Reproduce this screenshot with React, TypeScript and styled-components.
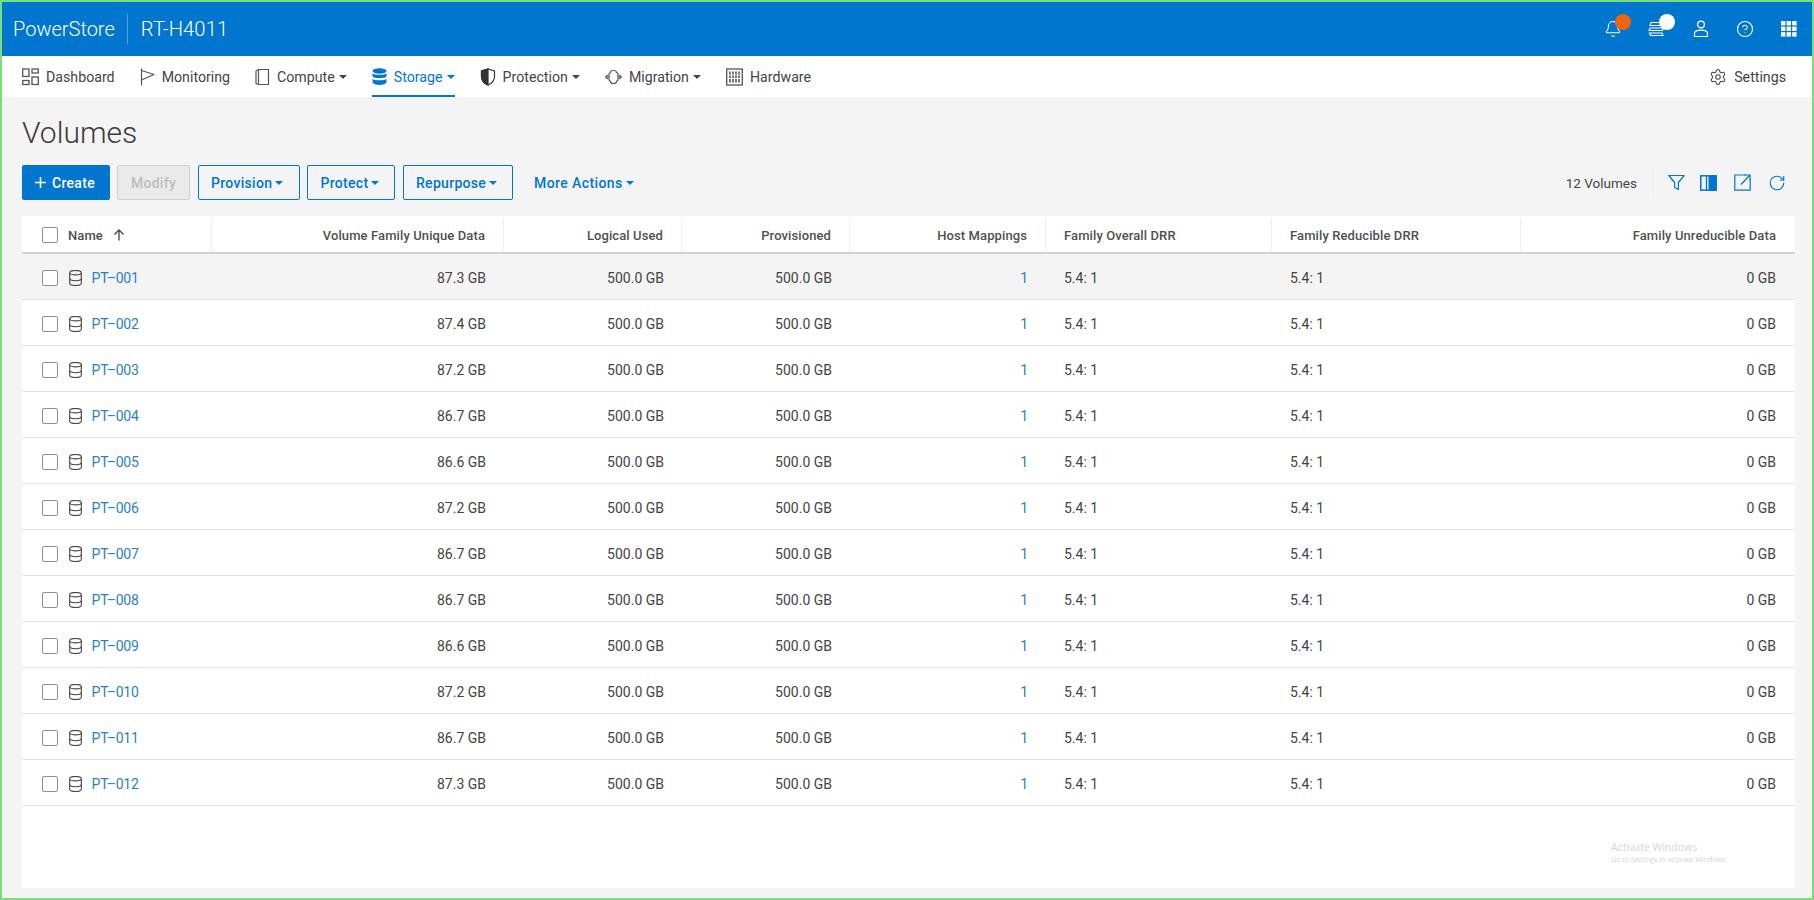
import React from 'react'
import styled, { createGlobalStyle } from 'styled-components'
import { Bell, CircleHelp, RotateCw, Settings } from 'lucide-react'

const GlobalStyle = createGlobalStyle`
  html, body {
    margin: 0;
    padding: 0;
    height: 100%;
    overflow: hidden;
  }
  body {
    font-family: Roboto, "Liberation Sans", sans-serif;
    color: #444;
  }
  * {
    box-sizing: border-box;
  }
`

const Frame = styled.div`
  width: 1814px;
  height: 900px;
  border: 2px solid #7ade7a;
  display: flex;
  flex-direction: column;
  background: #f4f4f4;
`

const TopBar = styled.header`
  height: 54px;
  background: #0076ce;
  color: #fff;
  display: flex;
  align-items: center;
  padding: 0 14px 0 11px;
  flex-shrink: 0;
`

const Brand = styled.div`
  font-size: 20px;
  font-weight: 300;
  line-height: 30px;
  padding-right: 12px;
  border-right: 1px solid #4da3e0;
`

const System = styled.div`
  font-size: 20.2px;
  font-weight: 300;
  letter-spacing: 0.1px;
  margin-left: 13px;
`

const TopIcons = styled.div`
  margin-left: auto;
  display: flex;
  align-items: center;
  gap: 26px;
`

const TopIcon = styled.span`
  position: relative;
  display: flex;
  width: 18px;
  height: 18px;
  align-items: center;
  justify-content: center;
`

const Dot = styled.span<{ $color: string }>`
  position: absolute;
  top: -6px;
  right: -9px;
  width: 16px;
  height: 16px;
  border-radius: 50%;
  background: ${(p) => p.$color};
`

const NavBar = styled.nav`
  height: 41px;
  background: #fff;
  display: flex;
  align-items: center;
  gap: 25px;
  padding: 0 26px 0 20px;
  flex-shrink: 0;
`

const NavItem = styled.a<{ $active?: boolean }>`
  height: 41px;
  display: flex;
  align-items: center;
  gap: 7px;
  font-size: 14.2px;
  color: ${(p) => (p.$active ? '#0076ce' : '#444')};
  border-bottom: 2px solid ${(p) => (p.$active ? '#0076ce' : 'transparent')};
  padding-top: 3px;
`

const NavRight = styled(NavItem)`
  margin-left: auto;
`

const Caret = styled.i`
  display: inline-block;
  width: 0;
  height: 0;
  margin-left: -3px;
  border-left: 4px solid transparent;
  border-right: 4px solid transparent;
  border-top: 4px solid currentColor;
`

const Page = styled.main`
  flex: 1;
  min-height: 0;
  display: flex;
  flex-direction: column;
  padding: 18px 17px 10px 20px;
`

const Title = styled.h1`
  margin: 0;
  font-size: 30px;
  line-height: 36px;
  font-weight: 300;
  color: #3c3c3c;
`

const Toolbar = styled.div`
  margin: 14px 0 0 -0.5px;
  height: 35px;
  display: flex;
  align-items: center;
  gap: 7.5px;
`

const Button = styled.button`
  height: 35px;
  padding: 0 12.5px;
  border-radius: 2px;
  font-family: inherit;
  font-size: 14px;
  font-weight: 500;
  letter-spacing: 0.3px;
  display: inline-flex;
  align-items: center;
  gap: 6px;
  background: transparent;
  border: 1px solid #0076ce;
  color: #0076ce;
`

const ProvisionButton = styled(Button)`
  width: 102px;
`

const ProtectButton = styled(Button)`
  width: 88px;
`

const RepurposeButton = styled(Button)`
  width: 110px;
`

const PrimaryButton = styled(Button)`
  background: #0076ce;
  color: #fff;
  width: 88px;
`

const DisabledButton = styled(Button)`
  background: #eaeaea;
  color: #bdbdbd;
  border-color: #cfcfcf;
  width: 73px;
  justify-content: center;
`

const TextButton = styled(Button)`
  border: none;
  margin-left: 1px;
  padding: 0 13px;
  letter-spacing: 0.4px;
`

const ToolbarRight = styled.div`
  margin-left: auto;
  display: flex;
  align-items: center;
  padding-right: 9px;
`

const Count = styled.span`
  font-size: 13.5px;
  color: #444;
  padding-right: 16px;
  line-height: 26px;
  border-right: 1px solid #ececec;
  margin-right: 14px;
`

const ToolIcons = styled.div`
  display: flex;
  align-items: center;
  gap: 17px;
  color: #0076ce;
  & > :nth-child(2) {
    margin-left: -2px;
  }
`

const Table = styled.section`
  margin-top: 16px;
  flex: 1;
  min-height: 0;
  background: #fff;
`

const columns = '190px 292px 178px 168px 196px 226px 249px 274px'

const HeadRow = styled.div`
  display: grid;
  grid-template-columns: ${columns};
  height: 38px;
  padding-top: 2px;
  border-bottom: 2px solid #d2d2d2;
`

const HeadCell = styled.div<{ $right?: boolean }>`
  display: flex;
  align-items: center;
  justify-content: ${(p) => (p.$right ? 'flex-end' : 'flex-start')};
  padding: 0 18px;
  font-size: 13px;
  font-weight: 500;
  letter-spacing: 0.1px;
  color: #505050;
  border-right: 1px solid #efefef;
  &:last-child {
    border-right: none;
    padding-right: 19px;
  }
`

const NameHead = styled(HeadCell)`
  padding: 0 0 0 20px;
  gap: 10px;
`

const Row = styled.div<{ $hover?: boolean }>`
  display: grid;
  grid-template-columns: ${columns};
  height: 46px;
  padding-top: 3px;
  border-bottom: 1px solid #e2e2e2;
  background: ${(p) => (p.$hover ? '#f4f4f4' : '#fff')};
`

const Cell = styled.div<{ $right?: boolean }>`
  display: flex;
  align-items: center;
  justify-content: ${(p) => (p.$right ? 'flex-end' : 'flex-start')};
  padding: 0 18px;
  font-size: 14px;
  color: #444;
  &:last-child {
    padding-right: 19px;
  }
`

const NameCell = styled(Cell)`
  padding: 0 0 0 20px;
`

const Check = styled.span`
  width: 16px;
  height: 16px;
  border: 1px solid #8f8f8f;
  border-radius: 2px;
  background: #fff;
  flex-shrink: 0;
`

const VolumeIcon = styled.span`
  display: flex;
  margin: 0 9.5px 0 11px;
  color: #444;
`

const Link = styled.a`
  color: #2a7fc4;
  font-size: 14px;
  letter-spacing: -0.2px;
`

const Watermark = styled.div`
  position: absolute;
  left: 1611px;
  top: 841px;
  color: #d4d4d4;
  font-family: "Open Sans", sans-serif;
  pointer-events: none;
`

const WatermarkTitle = styled.div`
  font-size: 10.5px;
  line-height: 13px;
`

const WatermarkSub = styled.div`
  font-size: 7.1px;
  line-height: 10px;
`

const DashboardIcon = () => (
  <svg width="17" height="18" viewBox="0 0 17 18" fill="none" stroke="#555" strokeWidth="1.3">
    <rect x="0.7" y="1" width="6.3" height="7.5" />
    <rect x="10" y="1" width="6.3" height="4" />
    <rect x="0.7" y="12.5" width="6.3" height="4" />
    <rect x="10" y="9" width="6.3" height="7.5" />
  </svg>
)

const FlagIcon = () => (
  <svg width="15" height="18" viewBox="0 0 15 18" fill="none" stroke="#555" strokeWidth="1.2">
    <path d="M1.5 0.5V17.5" />
    <path d="M1.5 2.5L14 6.5L1.5 12" strokeLinejoin="round" />
  </svg>
)

const ComputeIcon = () => (
  <svg width="15" height="18" viewBox="0 0 15 18" fill="none" stroke="#555" strokeWidth="1.2">
    <path d="M3.5 1.5H13.5V16.5H3.5Z" />
    <path d="M3.5 1.5L1 3V15.5L3.5 16.5" />
  </svg>
)

const StorageIcon = () => (
  <svg width="15" height="18" viewBox="0 0 15 18" fill="#0076ce">
    <ellipse cx="7.5" cy="3" rx="7" ry="2.7" />
    <path d="M0.5 5.2C2 7.2 13 7.2 14.5 5.2V8.6C13 10.6 2 10.6 0.5 8.6Z" />
    <path d="M0.5 10.8C2 12.8 13 12.8 14.5 10.8V14.6C13 17.8 2 17.8 0.5 14.6Z" />
  </svg>
)

const ShieldIcon = () => (
  <svg width="16" height="18" viewBox="0 0 16 18" fill="none" stroke="#333" strokeWidth="1.2">
    <path d="M8 1L14.5 3V8.5C14.5 12.5 11.5 15.5 8 17C4.5 15.5 1.5 12.5 1.5 8.5V3Z" />
    <path d="M8 1L1.5 3V8.5C1.5 12.5 4.5 15.5 8 17Z" fill="#333" />
  </svg>
)

const MigrationIcon = () => (
  <svg width="17" height="18" viewBox="0 0 17 18" fill="none" stroke="#555" strokeWidth="1.2">
    <path d="M5.5 4.5C5.5 3 6.5 2.5 8.5 2.5C10.5 2.5 11.5 3 11.5 4.5L13 5.5V12L11.5 13.5C11.5 15 10.5 15.5 8.5 15.5C6.5 15.5 5.5 15 5.5 13.5L4 12V5.5Z" />
    <path d="M0.8 9H4M13 9H16.2" />
    <path d="M2.6 7L0.8 9L2.6 11M14.4 7L16.2 9L14.4 11" />
  </svg>
)

const HardwareIcon = () => (
  <svg width="17" height="18" viewBox="0 0 17 18" fill="none" stroke="#555">
    <rect x="0.7" y="1" width="15.6" height="16" strokeWidth="1.3" />
    <path d="M4 3.5V14.5M7 3.5V14.5M10 3.5V14.5M13 3.5V14.5" strokeWidth="1.6" />
    <path d="M2 7H15M2 10.5H15" stroke="#fff" strokeWidth="0.9" />
  </svg>
)

const LayersIcon = () => (
  <svg width="18" height="18" viewBox="0 0 18 18" fill="none" stroke="#fff" strokeWidth="1.1">
    <path d="M3 2.5H14L15.5 5.5H2L3 2.5Z" />
    <path d="M2 8H15.5L14.5 10.5H1L2 8Z" />
    <path d="M1.5 13H14L15 15.5H2.5L1.5 13Z" />
  </svg>
)

const UserIcon = () => (
  <svg width="16" height="18" viewBox="0 0 16 18" fill="none" stroke="#fff" strokeWidth="1.2">
    <circle cx="8" cy="4.5" r="3.4" />
    <path d="M1.5 16.5V13.5C1.5 11.5 4 10.2 8 10.2C12 10.2 14.5 11.5 14.5 13.5V16.5Z" />
  </svg>
)

const AppsIcon = () => (
  <svg width="16" height="16" viewBox="0 0 16 16" fill="#fff">
    {[0, 5.6, 11.2].flatMap((y) =>
      [0, 5.6, 11.2].map((x) => <rect key={`${x}-${y}`} x={x} y={y} width="4.4" height="4.4" />),
    )}
  </svg>
)

const FunnelIcon = () => (
  <svg width="17" height="17" viewBox="0 0 17 17" fill="none" stroke="currentColor" strokeWidth="1.2">
    <path d="M0.8 1.5H16.2L10.4 8.5V15.5L6.6 13.5V8.5Z" strokeLinejoin="round" />
  </svg>
)

const ColumnsIcon = () => (
  <svg width="17" height="16" viewBox="0 0 17 16" stroke="currentColor">
    <rect x="0.8" y="0.8" width="15.4" height="14.4" fill="none" strokeWidth="1.5" />
    <rect x="8.5" y="0.8" width="7.7" height="14.4" fill="currentColor" strokeWidth="0" />
    <path d="M6.5 0.8V15.2" strokeWidth="1.3" />
  </svg>
)

const ExportIcon = () => (
  <svg width="17" height="17" viewBox="0 0 17 17" fill="none" stroke="currentColor" strokeWidth="1.2">
    <path d="M12 1H0.8V16.2H16.2V5" />
    <path d="M7 10.5L15.5 1.5M10.5 1H16V6.5" />
  </svg>
)

const VolumeGlyph = () => (
  <svg width="13" height="16" viewBox="0 0 13 16" fill="none" stroke="#444" strokeWidth="1.1">
    <ellipse cx="6.5" cy="2.7" rx="5.8" ry="2.2" />
    <path d="M0.7 2.7V13.3C0.7 14.5 3.3 15.5 6.5 15.5C9.7 15.5 12.3 14.5 12.3 13.3V2.7" />
    <path d="M0.7 8.5C0.7 9.7 3.3 10.7 6.5 10.7C9.7 10.7 12.3 9.7 12.3 8.5" />
  </svg>
)

const volumes: [string, string][] = [
  ['PT–001', '87.3 GB'],
  ['PT–002', '87.4 GB'],
  ['PT–003', '87.2 GB'],
  ['PT–004', '86.7 GB'],
  ['PT–005', '86.6 GB'],
  ['PT–006', '87.2 GB'],
  ['PT–007', '86.7 GB'],
  ['PT–008', '86.7 GB'],
  ['PT–009', '86.6 GB'],
  ['PT–010', '87.2 GB'],
  ['PT–011', '86.7 GB'],
  ['PT–012', '87.3 GB'],
]

export default function App() {
  return (
    <>
      <GlobalStyle />
      <Frame>
        <TopBar>
          <Brand>PowerStore</Brand>
          <System>RT-H4011</System>
          <TopIcons>
            <TopIcon>
              <Bell size={20} strokeWidth={1.4} />
              <Dot $color="#ee6411" />
            </TopIcon>
            <TopIcon>
              <LayersIcon />
              <Dot $color="#fff" />
            </TopIcon>
            <TopIcon>
              <UserIcon />
            </TopIcon>
            <TopIcon>
              <CircleHelp size={20} strokeWidth={1.5} />
            </TopIcon>
            <TopIcon>
              <AppsIcon />
            </TopIcon>
          </TopIcons>
        </TopBar>

        <NavBar>
          <NavItem>
            <DashboardIcon />
            Dashboard
          </NavItem>
          <NavItem>
            <FlagIcon />
            Monitoring
          </NavItem>
          <NavItem>
            <ComputeIcon />
            Compute
            <Caret />
          </NavItem>
          <NavItem $active>
            <StorageIcon />
            Storage
            <Caret />
          </NavItem>
          <NavItem>
            <ShieldIcon />
            Protection
            <Caret />
          </NavItem>
          <NavItem>
            <MigrationIcon />
            Migration
            <Caret />
          </NavItem>
          <NavItem>
            <HardwareIcon />
            Hardware
          </NavItem>
          <NavRight>
            <Settings size={18} strokeWidth={1.4} color="#444" />
            Settings
          </NavRight>
        </NavBar>

        <Page>
          <Title>Volumes</Title>
          <Toolbar>
            <PrimaryButton>
              <svg width="11" height="11" viewBox="0 0 11 11" stroke="#fff" strokeWidth="1.6">
                <path d="M5.5 0V11M0 5.5H11" />
              </svg>
              Create
            </PrimaryButton>
            <DisabledButton>Modify</DisabledButton>
            <ProvisionButton>
              Provision
              <Caret />
            </ProvisionButton>
            <ProtectButton>
              Protect
              <Caret />
            </ProtectButton>
            <RepurposeButton>
              Repurpose
              <Caret />
            </RepurposeButton>
            <TextButton>
              More Actions
              <Caret />
            </TextButton>
            <ToolbarRight>
              <Count>12 Volumes</Count>
              <ToolIcons>
                <FunnelIcon />
                <ColumnsIcon />
                <ExportIcon />
                <RotateCw size={18} strokeWidth={1.5} />
              </ToolIcons>
            </ToolbarRight>
          </Toolbar>

          <Table>
            <HeadRow>
              <NameHead>
                <Check />
                Name
                <svg width="12" height="12" viewBox="0 0 12 12" fill="none" stroke="#444" strokeWidth="1.3">
                  <path d="M6 11.5V1M1.5 5.5L6 1L10.5 5.5" />
                </svg>
              </NameHead>
              <HeadCell $right>Volume Family Unique Data</HeadCell>
              <HeadCell $right>Logical Used</HeadCell>
              <HeadCell $right>Provisioned</HeadCell>
              <HeadCell $right>Host Mappings</HeadCell>
              <HeadCell>Family Overall DRR</HeadCell>
              <HeadCell>Family Reducible DRR</HeadCell>
              <HeadCell $right>Family Unreducible Data</HeadCell>
            </HeadRow>
            {volumes.map(([name, unique], i) => (
              <Row key={name} $hover={i === 0}>
                <NameCell>
                  <Check />
                  <VolumeIcon>
                    <VolumeGlyph />
                  </VolumeIcon>
                  <Link>{name}</Link>
                </NameCell>
                <Cell $right>{unique}</Cell>
                <Cell $right>500.0 GB</Cell>
                <Cell $right>500.0 GB</Cell>
                <Cell $right>
                  <Link>1</Link>
                </Cell>
                <Cell>5.4: 1</Cell>
                <Cell>5.4: 1</Cell>
                <Cell $right>0 GB</Cell>
              </Row>
            ))}
          </Table>
        </Page>
      </Frame>
      <Watermark>
        <WatermarkTitle>Activate Windows</WatermarkTitle>
        <WatermarkSub>Go to Settings to activate Windows.</WatermarkSub>
      </Watermark>
    </>
  )
}
